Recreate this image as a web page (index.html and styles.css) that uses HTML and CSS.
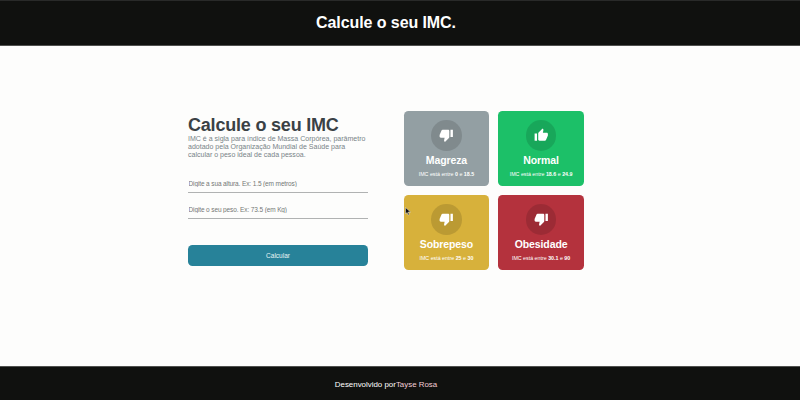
FILE: index.html
```html
<!DOCTYPE html>
<html lang="pt-BR">
<head>
<meta charset="utf-8">
<title>Calcule o seu IMC</title>
<link rel="stylesheet" href="styles.css">
</head>
<body>
<svg class="defs" aria-hidden="true">
  <symbol id="down" viewBox="0 0 24 24"><path d="M15 3H6c-.83 0-1.54.5-1.84 1.22l-3.02 7.05c-.09.23-.14.47-.14.73v2c0 1.1.9 2 2 2h6.31l-.95 4.57-.03.32c0 .41.17.79.44 1.06L9.83 23l6.59-6.59c.36-.36.58-.86.58-1.41V5c0-1.1-.9-2-2-2zm4 0v12h4V3h-4z"/></symbol>
  <symbol id="up" viewBox="0 0 24 24"><path d="M1 21h4V9H1v12zm22-11c0-1.1-.9-2-2-2h-6.31l.95-4.57.03-.32c0-.41-.17-.79-.44-1.06L14.17 1 7.59 7.59C7.22 7.95 7 8.45 7 9v10c0 1.1.9 2 2 2h9c.83 0 1.54-.5 1.84-1.22l3.02-7.05c.09-.23.14-.47.14-.73v-2z"/></symbol>
</svg>
<header class="header"><h1>Calcule o seu IMC.</h1></header>
<main class="main">
  <section class="form">
    <h2>Calcule o seu IMC</h2>
    <p>IMC é a sigla para índice de Massa Corpórea, parâmetro adotado pela Organização Mundial de Saúde para calcular o peso ideal de cada pessoa.</p>
    <input type="text" placeholder="Digite a sua altura. Ex: 1.5 (em metros)">
    <input type="text" placeholder="Digite o seu peso. Ex: 73.5 (em Kg)">
    <button type="button">Calcular</button>
  </section>
  <section class="cards">
    <article class="card gray"><div class="icon"><svg><use href="#down"/></svg></div><h3>Magreza</h3><p>IMC está entre <b>0</b> e <b>18.5</b></p></article>
    <article class="card green"><div class="icon"><svg><use href="#up"/></svg></div><h3>Normal</h3><p>IMC está entre <b>18.6</b> e <b>24.9</b></p></article>
    <article class="card yellow"><div class="icon"><svg><use href="#down"/></svg></div><h3>Sobrepeso</h3><p>IMC está entre <b>25</b> e <b>30</b></p></article>
    <article class="card red"><div class="icon"><svg><use href="#down"/></svg></div><h3>Obesidade</h3><p>IMC está entre <b>30.1</b> e <b>90</b></p></article>
  </section>
</main>
<footer class="footer">Desenvolvido por<a>Tayse Rosa</a></footer>
<svg class="cursor" viewBox="0 0 12 18"><path d="M1 1v13l3-3 2.300 5 2.200-1-2.200-5H11z"/></svg>
</body>
</html>
```
FILE: styles.css
```css
* { box-sizing: border-box; margin: 0; padding: 0; }
body {
  height: 400px;
  overflow: hidden;
  display: flex;
  flex-direction: column;
  background: #fdfdfc;
  font-family: "Liberation Sans", Arial, sans-serif;
}
.defs { position: absolute; width: 0; height: 0; }
.header, .footer {
  display: flex;
  align-items: center;
  justify-content: center;
  padding-right: 28px;
  background: #10110f;
  color: #fff;
}
.header { height: 46px; border-top: 1px solid #292a29; border-bottom: 1px solid #50514f; }
.header h1 { font-size: 16px; letter-spacing: -0.080px; line-height: 18px; }
.main {
  flex: 1;
  display: grid;
  grid-template-columns: 180px 180.500px;
  column-gap: 35.500px;
  justify-content: center;
  padding: 64.500px 28px 0 0;
}
.form { padding-top: 4px; }
.form h2 { font-size: 18px; letter-spacing: -0.200px; line-height: 20px; color: #3a4145; }
.form p { font-size: 7.040px; line-height: 8px; color: #788387; }
.form input {
  display: block;
  width: 100%;
  height: 18px;
  border: 0;
  border-bottom: 1px solid #b0b2b2;
  background: none;
  padding: 0 0.500px;
  font: 6.500px "Liberation Sans", Arial, sans-serif;
  letter-spacing: -0.120px;
}
.form p + input { margin: 16px 0 8px; }
.form input::placeholder { color: #747776; opacity: 1; }
.form button {
  display: block;
  width: 100%;
  height: 21px;
  margin-top: 26px;
  border: 0;
  border-radius: 4.500px;
  background: #278299;
  color: #e9f4f5;
  font: 6.500px "Liberation Sans", Arial, sans-serif;
}
.cards {
  display: grid;
  grid-template-columns: 1fr 1fr;
  grid-auto-rows: 75.500px;
  gap: 8.800px;
}
.card {
  display: flex;
  flex-direction: column;
  align-items: center;
  padding-top: 9.500px;
  border-radius: 4.500px;
  color: #fff;
}
.icon {
  display: grid;
  place-items: center;
  width: 30.500px;
  height: 30.500px;
  border-radius: 50%;
  background: rgba(0, 0, 0, 0.13);
}
.icon svg { width: 14.500px; height: 14.500px; fill: #fff; }
.card h3 { margin-top: 3.500px; font-size: 10.500px; letter-spacing: -0.100px; line-height: 13px; }
.card p { margin-top: 4px; font-size: 5.300px; line-height: 6px; }
.gray { background: #939fa3; }
.green { background: #1cc068; }
.yellow { background: #d7b13b; }
.red { background: #b4323d; }
.footer { height: 34px; padding-top: 2px; border-top: 1px solid #50514f; font-size: 7.920px; }
.footer a { color: #f3cdd5; }
.cursor {
  position: absolute;
  left: 405px;
  top: 207px;
  width: 6px;
  height: 9px;
  fill: #111;
  stroke: #e8e8e8;
  stroke-width: 1;
}
```
